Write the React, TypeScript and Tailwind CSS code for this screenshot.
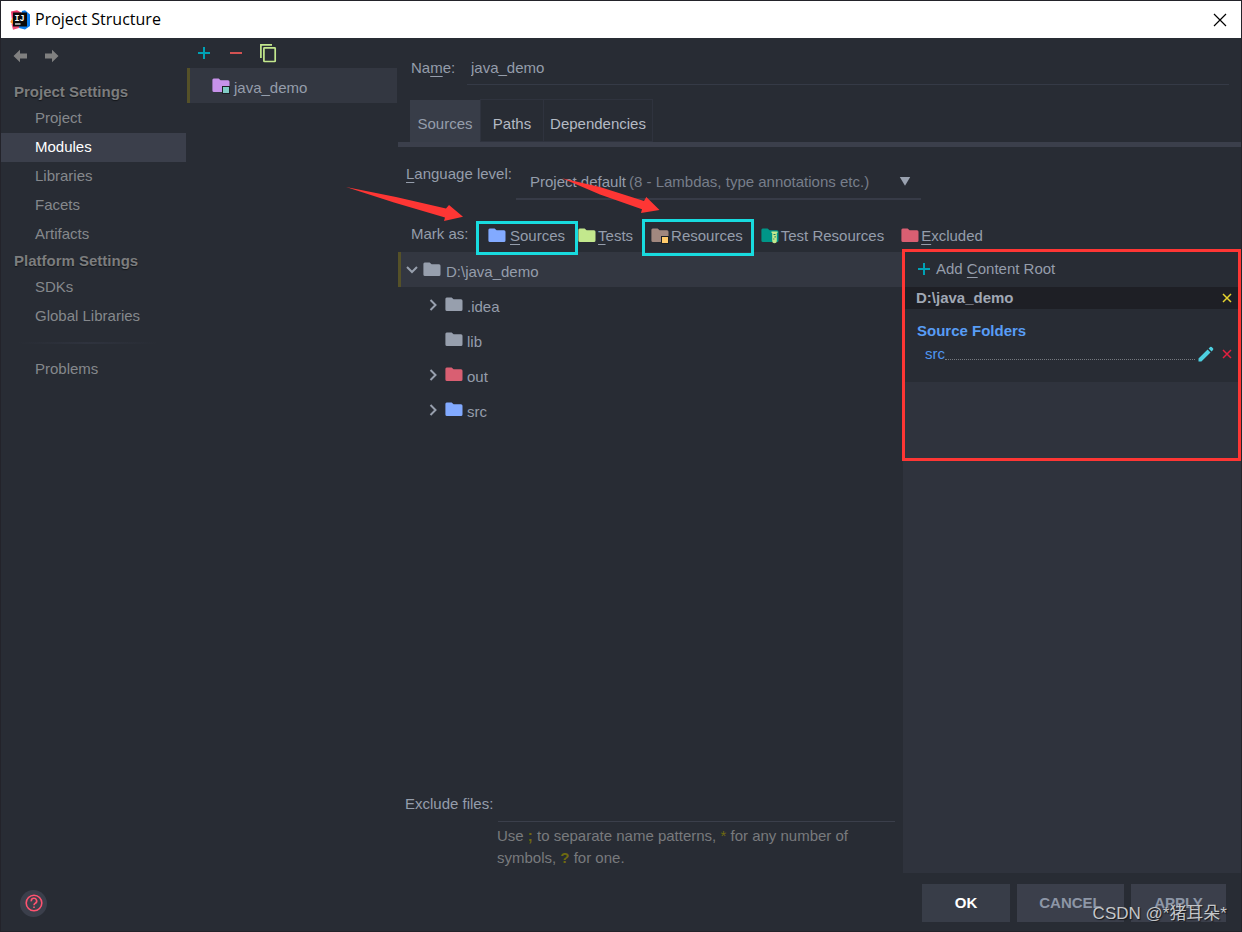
import React from "react";

const FONT = "font-['Liberation_Sans','Noto_Sans_CJK_SC',sans-serif]";

function Folder({ color, children }: { color: string; children?: React.ReactNode }) {
  return (
    <svg width="18" height="16" viewBox="0 0 18 16" className="shrink-0" aria-hidden="true">
      <path
        d="M1.7 0.5 H6.6 L8.6 2.2 H16 A1.6 1.6 0 0 1 17.5 3.8 V12.4 A1.6 1.6 0 0 1 16 14 H2 A1.6 1.6 0 0 1 0.4 12.4 V2 A1.5 1.5 0 0 1 1.7 0.5 Z"
        fill={color}
      />
      {children}
    </svg>
  );
}

function Chevron({ open = false }: { open?: boolean }) {
  return (
    <svg width="12" height="12" viewBox="0 0 12 12" className="shrink-0" fill="none" stroke="#979fad" strokeWidth="2" aria-hidden="true">
      {open ? <path d="M1 3 L6 8 L11 3" /> : <path d="M3.5 1 L8.5 6 L3.5 11" />}
    </svg>
  );
}

function Plus() {
  return (
    <svg width="12" height="12" viewBox="0 0 12 12" stroke="#00a1b5" strokeWidth="2" aria-hidden="true">
      <path d="M6 0 V12 M0 6 H12" />
    </svg>
  );
}

function Cross({ color }: { color: string }) {
  return (
    <svg width="10" height="10" viewBox="0 0 10 10" fill="none" stroke={color} strokeWidth="1.5" aria-hidden="true">
      <path d="M1 1 L9 9 M9 1 L1 9" />
    </svg>
  );
}

function Logo() {
  return (
    <svg width="20" height="20" viewBox="0 0 20 20" aria-hidden="true">
      <path d="M1 1.5 L7 0.3 L12 3 L6 12 L2 11 Z" fill="#ee3a6c" />
      <path d="M0.3 12 L3 7 L6 12 L4 16 Z" fill="#f98b2a" />
      <path d="M1.5 14 L10 14 L9 18 L3 19.7 Z" fill="#ef4a78" />
      <path d="M12 1 L15 0.3 L20 4.5 V16 L15 19.5 L9 18 Z" fill="#0a7df0" />
      <rect x="3" y="2.5" width="14" height="14" fill="#0a0a0c" />
      <path d="M5 14 H10.5" stroke="#fff" strokeWidth="1.2" />
      <text x="4.4" y="10.8" fontSize="8.5" fontWeight="bold" fill="#fff" fontFamily="Liberation Mono">
        IJ
      </text>
    </svg>
  );
}

function NavItem({ label, active = false }: { label: string; active?: boolean }) {
  return (
    <li>
      <button
        type="button"
        className={
          active
            ? "block h-[29px] w-full bg-[#3b3f4b] pb-[2px] pl-[34px] text-left text-white"
            : "block h-[29px] w-full pb-[2px] pl-[34px] text-left text-[#85888c]"
        }
      >
        {label}
      </button>
    </li>
  );
}

function NavHeading({ children }: { children: string }) {
  return (
    <h2 className="flex h-6 items-center pl-[13px] font-bold text-[#7c7d7e] [text-shadow:0_1px_1px_#15171b]">{children}</h2>
  );
}

function Sidebar() {
  return (
    <nav className="mr-px w-[185px] shrink-0" aria-label="Settings sections">
      <div className="flex h-[42px] items-center gap-[18px] pb-[6px] pl-3 text-[#808080]">
        <button type="button" aria-label="Back">
          <svg width="14" height="14" viewBox="0 0 14 14" fill="currentColor" aria-hidden="true">
            <path d="M0.5 7 L7 0.8 V4.5 H14 V9.5 H7 V13.2 Z" />
          </svg>
        </button>
        <button type="button" aria-label="Forward">
          <svg width="14" height="14" viewBox="0 0 14 14" fill="currentColor" aria-hidden="true">
            <path d="M13.5 7 L7 0.8 V4.5 H0 V9.5 H7 V13.2 Z" />
          </svg>
        </button>
      </div>
      <NavHeading>Project Settings</NavHeading>
      <ul>
        <NavItem label="Project" />
        <NavItem label="Modules" active />
        <NavItem label="Libraries" />
        <NavItem label="Facets" />
        <NavItem label="Artifacts" />
      </ul>
      <NavHeading>Platform Settings</NavHeading>
      <ul>
        <NavItem label="SDKs" />
        <NavItem label="Global Libraries" />
      </ul>
      <div className="flex h-6 items-center pr-7 pl-4">
        <div className="h-[2px] w-full bg-linear-to-r from-transparent via-[#2f333e] to-transparent" />
      </div>
      <ul>
        <NavItem label="Problems" />
      </ul>
    </nav>
  );
}

function ModuleList() {
  return (
    <section className="mr-px w-[210px] shrink-0" aria-label="Modules">
      <div className="flex h-[30px] items-center pl-[11px]">
        <button type="button" aria-label="Add" className="mr-5">
          <Plus />
        </button>
        <button type="button" aria-label="Remove" className="mr-[17px]">
          <svg width="12" height="12" viewBox="0 0 12 12" stroke="#d25252" strokeWidth="2" aria-hidden="true">
            <path d="M0 6 H12" />
          </svg>
        </button>
        <button type="button" aria-label="Copy">
          <svg width="18" height="20" viewBox="0 0 18 20" fill="none" stroke="#c3e88d" strokeWidth="1.7" aria-hidden="true">
            <path d="M13 1.9 H1.9 V15" />
            <rect x="4.9" y="4.9" width="11.3" height="13.6" rx="0.6" />
          </svg>
        </button>
      </div>
      <button
        type="button"
        className="flex h-[35px] w-full items-center border-l-3 border-[#555128] bg-[#333741] pl-[22px] text-[#959dab]"
      >
        <Folder color="#c792ea">
          <rect x="10.5" y="8.5" width="7" height="7" fill="#80cbc4" stroke="#1d2026" />
        </Folder>
        <span className="pt-1 pl-1">java_demo</span>
      </button>
    </section>
  );
}

function Underlined({ children }: { children: string }) {
  return <span className="underline decoration-1 underline-offset-3">{children}</span>;
}

const MARK = "flex h-[37px] items-center gap-[2px] pb-[3px] whitespace-nowrap";

function MarkAs() {
  return (
    <div className="relative z-10 mt-[19px] flex h-[33px] items-start pl-[13px]">
      <span className="w-[65px] shrink-0 leading-[30px]">Mark as:</span>
      <button
        type="button"
        className="mt-[2px] flex h-[34px] items-center gap-1 border-3 border-[#18dbdf] pr-[10px] pb-1 pl-[9px]"
      >
        <Folder color="#82aaff" />
        <span>
          <Underlined>S</Underlined>ources
        </span>
      </button>
      <button type="button" className={MARK}>
        <Folder color="#c3e88d" />
        <span>
          <Underlined>T</Underlined>ests
        </span>
      </button>
      <button
        type="button"
        className="ml-[9px] flex h-[37px] items-center gap-[2px] border-3 border-[#18dbdf] px-[6px] pb-[3px] whitespace-nowrap"
      >
        <Folder color="#a1887f">
          <rect x="10.5" y="8.5" width="7" height="7" fill="#ffcb6b" stroke="#1d2026" />
        </Folder>
        <span className="pr-[2px]">Resources</span>
      </button>
      <button type="button" className={MARK + " ml-[7px]"}>
        <Folder color="#009688">
          <path d="M10.5 3.5 H16.5 V5 H15.8 V13 A2.2 2.2 0 0 1 11.2 13 V5 H10.5 Z" fill="#c3e88d" />
          <path d="M12.5 6.5 H14.5 M13.5 8.8 H14.8 M12.3 11 H13.3" stroke="#12786a" strokeWidth="1.2" />
        </Folder>
        <span>Test Resources</span>
      </button>
      <button type="button" className={MARK + " ml-[17px]"}>
        <Folder color="#d95f72" />
        <span>
          <Underlined>E</Underlined>xcluded
        </span>
      </button>
    </div>
  );
}

function TreeRow({ name, color, expandable = true }: { name: string; color: string; expandable?: boolean }) {
  return (
    <li className="flex h-[35px] items-center pl-[29px]">
      <span className="w-[18px]">{expandable && <Chevron />}</span>
      <Folder color={color} />
      <span className="pt-[5px] pl-1">{name}</span>
    </li>
  );
}

function SourceTree() {
  return (
    <div className="flex min-w-0 flex-1 flex-col">
      <ul className="flex-1">
        <li className="flex h-[35px] items-center border-l-3 border-[#555128] bg-[#333741] pl-[5px]">
          <Chevron open />
          <span className="pl-[5px]">
            <Folder color="#979fad" />
          </span>
          <span className="pt-[5px] pl-[5px]">D:\java_demo</span>
        </li>
        <TreeRow name=".idea" color="#979fad" />
        <TreeRow name="lib" color="#979fad" expandable={false} />
        <TreeRow name="out" color="#d95f72" />
        <TreeRow name="src" color="#82aaff" />
      </ul>
      <div className="grid grid-cols-[92px_1fr] pr-2 pb-1 pl-[7px]">
        <label htmlFor="exclude" className="self-center pb-[2px]">
          Exclude files:
        </label>
        <input
          id="exclude"
          type="text"
          className="ml-px h-[35px] min-w-0 border-b border-[#3b3f4b] bg-transparent px-1 outline-none"
        />
        <p className="col-start-2 pt-[3px] leading-[22px] text-[#787a7d]">
          Use <b className="text-[#6f6a10]">;</b> to separate name patterns, <span className="text-[#6f6a10]">*</span> for any
          number of
          <br />
          symbols, <b className="text-[#6f6a10]">?</b> for one.
        </p>
      </div>
    </div>
  );
}

function ContentRoots() {
  return (
    <aside className="relative w-[338px] shrink-0 bg-[#2f333d]">
      <div className="bg-[#282c34]">
        <button type="button" className="flex h-[35px] items-center gap-[6px] pb-[2px] pl-[15px]">
          <Plus />
          <span>
            Add <Underlined>C</Underlined>ontent Root
          </span>
        </button>
        <div className="flex h-[22px] items-center justify-between bg-[#1e1f25] pr-[9px] pl-[13px]">
          <h3 className="font-bold text-[#a0a7b4]">D:\java_demo</h3>
          <button type="button" aria-label="Remove content root">
            <Cross color="#e6d32f" />
          </button>
        </div>
        <div className="pt-[11px] pr-[9px] pb-[16px] pl-[14px] text-[#4f96f0]">
          <h4 className="leading-[22px] font-bold text-[#589df6]">Source Folders</h4>
          <div className="flex h-6 items-center pl-2">
            <a href="#src">src</a>
            <span className="mt-[11px] mr-[3px] flex-1 border-b border-dotted border-[#75797f]" />
            <button type="button" aria-label="Edit properties" className="mr-[8px]">
              <svg width="16" height="16" viewBox="0 0 16 16" fill="#4dd0e1" aria-hidden="true">
                <path d="M0.5 12.6 L9.6 3.5 L12.5 6.4 L3.4 15.5 H0.5 Z M10.6 2.5 L12.1 1 Q12.9 0.3 13.7 1 L15 2.3 Q15.7 3.1 15 3.9 L13.5 5.4 Z" />
              </svg>
            </button>
            <button type="button" aria-label="Unmark source">
              <Cross color="#e3203f" />
            </button>
          </div>
        </div>
      </div>
      <div className="pointer-events-none absolute inset-x-0 -top-[3px] z-10 -ml-px h-[212px] border-3 border-[#fe3634]" />
    </aside>
  );
}

function ModuleEditor() {
  return (
    <main className="flex min-w-0 flex-1 flex-col text-[#959dab]">
      <div className="flex items-center pt-[14px] pr-3 pl-[13px]">
        <label htmlFor="name" className="w-14 shrink-0 pb-[2px]">
          Na<Underlined>m</Underlined>e:
        </label>
        <input
          id="name"
          type="text"
          defaultValue="java_demo"
          className="h-[33px] min-w-0 flex-1 border-b border-[#353a46] bg-transparent px-1 pb-[2px] outline-none"
        />
      </div>
      <div role="tablist" className="mt-[14px] flex h-12 border-b-5 border-[#3b3f4b] pl-3 text-[#b4bac4]">
        <button type="button" role="tab" aria-selected="true" className="mt-px w-[70px] bg-[#383d48] pt-[6px] text-[#959dab]">
          Sources
        </button>
        <button type="button" role="tab" aria-selected="false" className="w-16 border border-[#2f333e] pt-[6px]">
          Paths
        </button>
        <button type="button" role="tab" aria-selected="false" className="w-[109px] border border-l-0 border-[#2f333e] pt-[6px]">
          Dependencies
        </button>
      </div>
      <div className="mt-[18px] flex items-start pl-2">
        <label htmlFor="level" className="w-[110px] shrink-0 leading-[18px]">
          <Underlined>L</Underlined>anguage level:
        </label>
        <div className="grid w-[405px] items-center border-b-2 border-[#373b47]">
          <select
            id="level"
            className="col-start-1 row-start-1 h-[33px] w-full appearance-none bg-transparent pl-[14px] outline-none"
          >
            <option>Project default</option>
          </select>
          <span className="pointer-events-none col-start-1 row-start-1 flex items-center justify-between pr-[10px] pl-[113px] text-[#777e8a]">
            (8 - Lambdas, type annotations etc.)
            <svg width="12" height="12" viewBox="0 0 12 12" fill="#9aa2b0" aria-hidden="true">
              <path d="M0.8 1 H11.2 L6 9.8 Z" />
            </svg>
          </span>
        </div>
      </div>
      <MarkAs />
      <div className="flex flex-1">
        <SourceTree />
        <ContentRoots />
      </div>
    </main>
  );
}

function Footer() {
  return (
    <footer className="flex h-[58px] items-center justify-between pt-[2px] pr-[15px] pl-[19px]">
      <button type="button" aria-label="Help" className="flex size-[27px] items-center justify-center rounded-full bg-[#3b3f4b]">
        <svg width="18" height="18" viewBox="0 0 18 18" fill="none" stroke="#ff5370" strokeWidth="1.6" aria-hidden="true">
          <circle cx="9" cy="9" r="7.8" />
          <path d="M6.3 7.3 A2.7 2.7 0 1 1 10.3 9.3 Q9 10 9 11.3 M9 12.4 V14" />
        </svg>
      </button>
      <div className="flex gap-[7px] font-bold text-[#8d96a6]">
        <button type="button" className="h-[38px] w-[88px] bg-[#383d48] text-white">
          OK
        </button>
        <button type="button" className="h-[38px] w-[107px] bg-[#3b3f4b]">
          CANCEL
        </button>
        <button type="button" className="h-[38px] w-[95px] bg-[#3b3f4b]">
          APPLY
        </button>
      </div>
    </footer>
  );
}

function Arrows() {
  return (
    <svg
      width="320"
      height="50"
      viewBox="345 175 320 50"
      fill="#fe3634"
      className="pointer-events-none absolute top-[174px] left-[344px] z-20"
      aria-hidden="true"
    >
      <path d="M346 187 L396 197 L446 208.5 L449 205 L463 216.7 L444 221 L445 217.5 L394 202.5 Z" />
      <path d="M562 178.3 L600 187 L644 201 L646.3 197 L659.5 210 L641 213 L642 209.3 L600 194.5 Z" />
    </svg>
  );
}

export default function App() {
  return (
    <div
      className={`${FONT} relative flex min-h-screen flex-col border border-[#23232a] bg-[#282c34] text-[15px] leading-5 text-[#959dab]`}
    >
      <header className="flex h-[37px] items-center bg-white pr-[14px] pl-[9px] text-black">
        <Logo />
        <h1 className="flex-1 pb-[2px] pl-[5px] font-['Open_Sans','Noto_Sans',sans-serif] text-base leading-5">
          Project Structure
        </h1>
        <button type="button" aria-label="Close">
          <svg width="14" height="14" viewBox="0 0 14 14" stroke="#000" strokeWidth="1.2" aria-hidden="true">
            <path d="M1 1 L13 13 M13 1 L1 13" />
          </svg>
        </button>
      </header>
      <div className="flex flex-1">
        <Sidebar />
        <ModuleList />
        <ModuleEditor />
      </div>
      <Footer />
      <Arrows />
      <p className="pointer-events-none absolute right-[14px] bottom-[5px] z-20 text-[17px] leading-6 text-[#c4c6c9] [text-shadow:1px_1px_1px_#15171b]">
        CSDN @*猪耳朵*
      </p>
    </div>
  );
}
